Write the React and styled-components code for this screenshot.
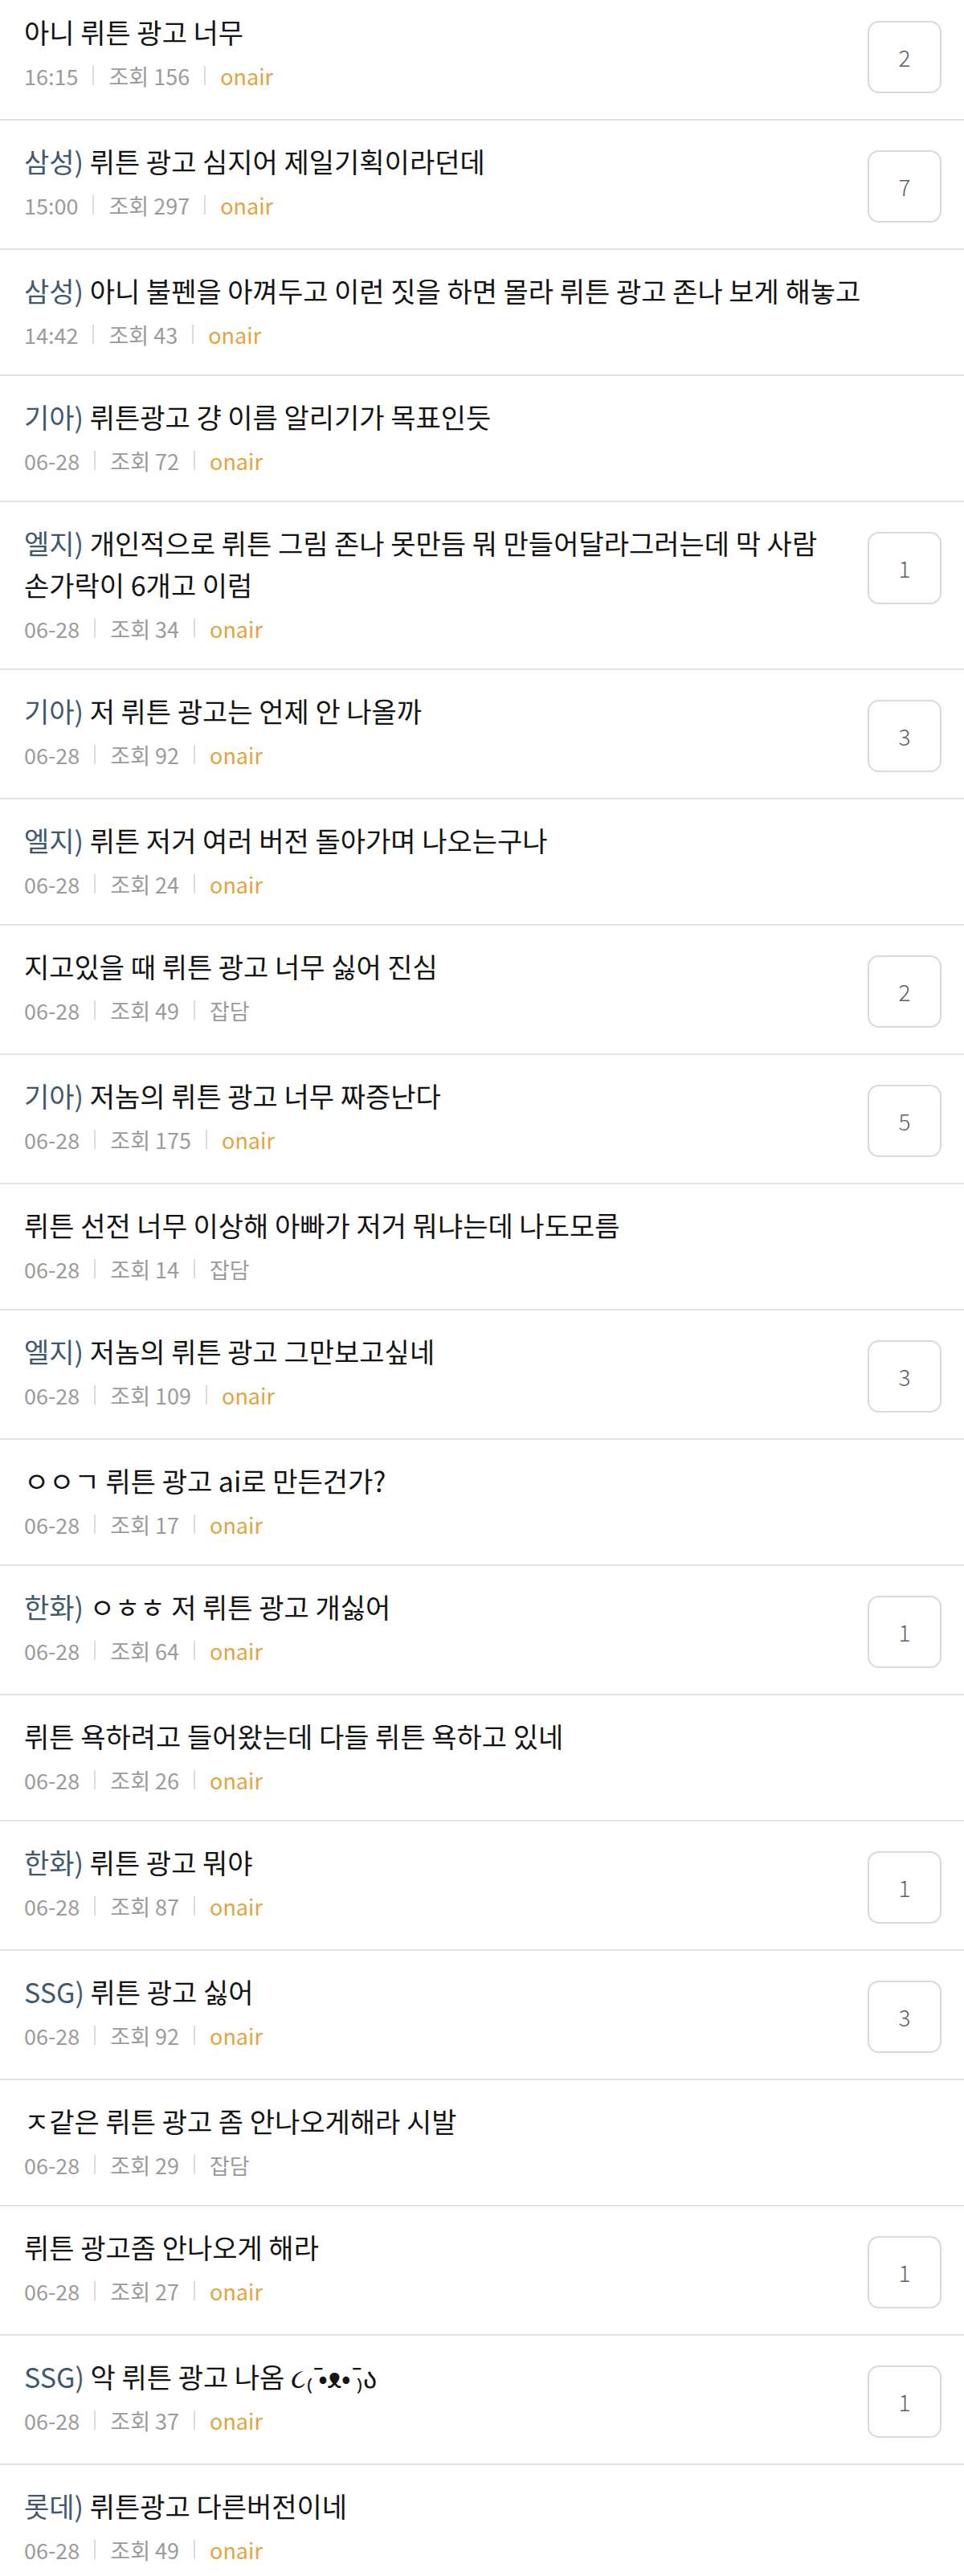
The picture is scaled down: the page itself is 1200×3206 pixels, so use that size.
import React from 'react';
import styled, { createGlobalStyle } from 'styled-components';

const GlobalStyle = createGlobalStyle`
  html, body {
    margin: 0;
    padding: 0;
    background: #fff;
  }

  body {
    font-family: "Noto Sans CJK KR", "Noto Sans", sans-serif;
    -webkit-font-smoothing: antialiased;
  }
`;

const posts = [
  { team: '', title: '아니 뤼튼 광고 너무', date: '16:15', views: 156, tag: 'onair', comments: 2 },
  { team: '삼성)', title: '뤼튼 광고 심지어 제일기획이라던데', date: '15:00', views: 297, tag: 'onair', comments: 7 },
  { team: '삼성)', title: '아니 불펜을 아껴두고 이런 짓을 하면 몰라 뤼튼 광고 존나 보게 해놓고', date: '14:42', views: 43, tag: 'onair' },
  { team: '기아)', title: '뤼튼광고 걍 이름 알리기가 목표인듯', date: '06-28', views: 72, tag: 'onair' },
  { team: '엘지)', title: '개인적으로 뤼튼 그림 존나 못만듬 뭐 만들어달라그러는데 막 사람 손가락이 6개고 이럼', date: '06-28', views: 34, tag: 'onair', comments: 1 },
  { team: '기아)', title: '저 뤼튼 광고는 언제 안 나올까', date: '06-28', views: 92, tag: 'onair', comments: 3 },
  { team: '엘지)', title: '뤼튼 저거 여러 버전 돌아가며 나오는구나', date: '06-28', views: 24, tag: 'onair' },
  { team: '', title: '지고있을 때 뤼튼 광고 너무 싫어 진심', date: '06-28', views: 49, tag: '잡담', comments: 2 },
  { team: '기아)', title: '저놈의 뤼튼 광고 너무 짜증난다', date: '06-28', views: 175, tag: 'onair', comments: 5 },
  { team: '', title: '뤼튼 선전 너무 이상해 아빠가 저거 뭐냐는데 나도모름', date: '06-28', views: 14, tag: '잡담' },
  { team: '엘지)', title: '저놈의 뤼튼 광고 그만보고싶네', date: '06-28', views: 109, tag: 'onair', comments: 3 },
  { team: '', title: 'ㅇㅇㄱ 뤼튼 광고 ai로 만든건가?', date: '06-28', views: 17, tag: 'onair' },
  { team: '한화)', title: 'ㅇㅎㅎ 저 뤼튼 광고 개싫어', date: '06-28', views: 64, tag: 'onair', comments: 1 },
  { team: '', title: '뤼튼 욕하려고 들어왔는데 다들 뤼튼 욕하고 있네', date: '06-28', views: 26, tag: 'onair' },
  { team: '한화)', title: '뤼튼 광고 뭐야', date: '06-28', views: 87, tag: 'onair', comments: 1 },
  { team: 'SSG)', title: '뤼튼 광고 싫어', date: '06-28', views: 92, tag: 'onair', comments: 3 },
  { team: '', title: 'ㅈ같은 뤼튼 광고 좀 안나오게해라 시발', date: '06-28', views: 29, tag: '잡담' },
  { team: '', title: '뤼튼 광고좀 안나오게 해라', date: '06-28', views: 27, tag: 'onair', comments: 1 },
  { team: 'SSG)', title: '악 뤼튼 광고 나옴 ૮₍ ̄•ᴥ• ̄₎ა', date: '06-28', views: 37, tag: 'onair', comments: 1 },
  { team: '롯데)', title: '뤼튼광고 다른버전이네', date: '06-28', views: 49, tag: 'onair' },
];

const List = styled.ul`
  list-style: none;
  margin: 0;
  padding: 0;
`;

const Row = styled.li`
  display: flex;
  align-items: flex-start;
  gap: 30px;
  padding: 25px 28px 32px 30px;
  border-bottom: 2px solid #e2e2e2;

  /* the screenshot starts a little below the top of the first row */
  &:first-child {
    padding-top: 14px;
  }
`;

const Body = styled.div`
  flex: 1;
  min-width: 0;
`;

const Title = styled.p`
  margin: 0;
  font-size: 34px;
  line-height: 52px;
  font-weight: 400;
  color: #141414;
  word-break: keep-all;
`;

const Team = styled.span`
  color: #41596f;
`;

const Meta = styled.div`
  display: flex;
  align-items: center;
  margin-top: 10px;
  height: 36px;
  font-size: 27px;
  color: #9b9b9b;
`;

const Divider = styled.span`
  width: 2px;
  height: 24px;
  margin: 0 18px;
  background: #dcdcdc;
`;

const Tag = styled.span`
  color: ${props => (props.$onair ? '#e3a43e' : '#9b9b9b')};
`;

const CommentBox = styled.div`
  flex: none;
  display: flex;
  align-items: center;
  justify-content: center;
  box-sizing: border-box;
  width: 92px;
  height: 90px;
  margin-top: 12px;
  border: 2px solid #dadada;
  border-radius: 14px;
  font-size: 28px;
  font-weight: 300;
  color: #5e5e5e;
`;

const Post = ({ post }) => (
  <Row>
    <Body>
      <Title>
        {post.team && <Team>{post.team} </Team>}
        {post.title}
      </Title>
      <Meta>
        <span>{post.date}</span>
        <Divider />
        <span>조회 {post.views}</span>
        <Divider />
        <Tag $onair={post.tag === 'onair'}>{post.tag}</Tag>
      </Meta>
    </Body>
    {post.comments && <CommentBox>{post.comments}</CommentBox>}
  </Row>
);

const App = () => {
  return (
    <>
      <GlobalStyle />
      <List>
        {posts.map((post, index) => (
          <Post key={index} post={post} />
        ))}
      </List>
    </>
  );
};

export default App;
